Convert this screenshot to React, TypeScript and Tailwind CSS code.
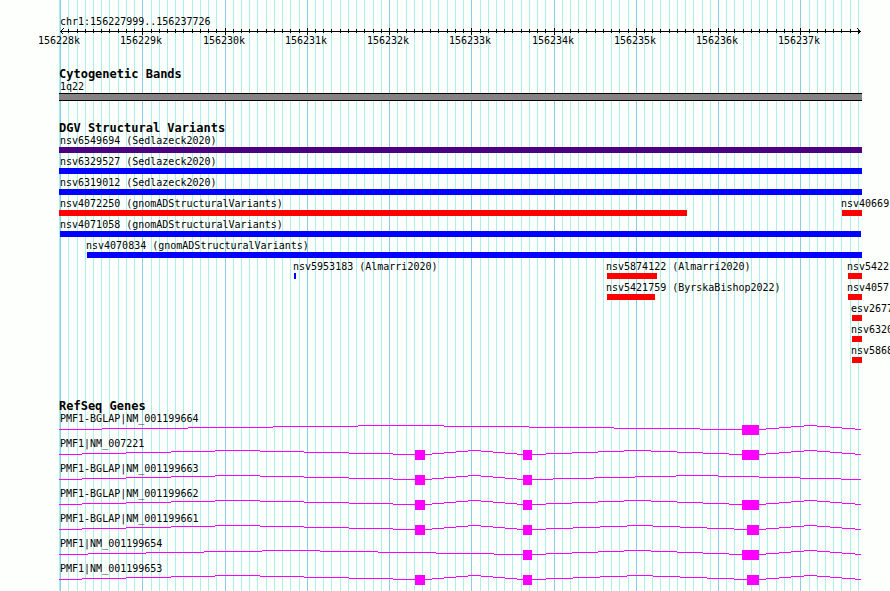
const PLOT_WIDTH = 803;
const REGION_START = 156227999;
const REGION_LENGTH = 9727;

// bp position -> plot x, the scale leaves 1px on the left and 2px on the right
const toX = (bp: number) =>
  Math.round(((bp - REGION_START) / REGION_LENGTH) * 800) + 1;

const percent = (x: number) => `${(x / PLOT_WIDTH) * 100}%`;

const ticks = Array.from({ length: 98 }, (_, i) => ({
  x: toX(156228000 + i * 100),
  major: i % 10 === 0,
  label: `${156228 + i / 10}k`,
}));

type Variant = { name: string; start: number; end: number; color: string };

const PURPLE = "bg-[#4b0082]";
const BLUE = "bg-[#0000ff]";
const RED = "bg-[#ff0000]";

const variantLanes: Variant[][] = [
  [{ name: "nsv6549694 (Sedlazeck2020)", start: 0, end: 803, color: PURPLE }],
  [{ name: "nsv6329527 (Sedlazeck2020)", start: 0, end: 803, color: BLUE }],
  [{ name: "nsv6319012 (Sedlazeck2020)", start: 0, end: 803, color: BLUE }],
  [
    { name: "nsv4072250 (gnomADStructuralVariants)", start: 0, end: 628, color: RED },
    { name: "nsv40669", start: 783, end: 803, color: RED },
  ],
  [{ name: "nsv4071058 (gnomADStructuralVariants)", start: 1, end: 802, color: BLUE }],
  [{ name: "nsv4070834 (gnomADStructuralVariants)", start: 28, end: 803, color: BLUE }],
  [
    { name: "nsv5953183 (Almarri2020)", start: 235, end: 237, color: BLUE },
    { name: "nsv5874122 (Almarri2020)", start: 548, end: 598, color: RED },
    { name: "nsv5422", start: 789, end: 803, color: RED },
  ],
  [
    { name: "nsv5421759 (ByrskaBishop2022)", start: 548, end: 596, color: RED },
    { name: "nsv4057", start: 789, end: 803, color: RED },
  ],
  [{ name: "esv2677", start: 793, end: 803, color: RED }],
  [{ name: "nsv6320", start: 793, end: 803, color: RED }],
  [{ name: "nsv5868", start: 793, end: 803, color: RED }],
];

const genes: { name: string; exons: [number, number][] }[] = [
  { name: "PMF1-BGLAP|NM_001199664", exons: [[683, 700]] },
  { name: "PMF1|NM_007221", exons: [[356, 366], [464, 473], [683, 700]] },
  { name: "PMF1-BGLAP|NM_001199663", exons: [[356, 366], [464, 473]] },
  { name: "PMF1-BGLAP|NM_001199662", exons: [[356, 366], [464, 473], [683, 700]] },
  { name: "PMF1-BGLAP|NM_001199661", exons: [[356, 366], [464, 473], [688, 700]] },
  { name: "PMF1|NM_001199654", exons: [[464, 473], [683, 700]] },
  { name: "PMF1|NM_001199653", exons: [[356, 366], [464, 473], [688, 700]] },
];

// introns fill the space between exons and climb to a peak in the middle,
// one pixel row at a time
const intronPath = (exons: [number, number][]) => {
  const edges = [0, ...exons.flat(), 802];
  let path = "";
  for (let i = 0; i < edges.length; i += 2) {
    const [a, b] = [edges[i], edges[i + 1]];
    const step = (b - a) / 8;
    let x = a;
    for (let k = 0; k <= 8; k++) {
      const next = k === 8 ? b : Math.ceil(a + (k + 0.5) * step);
      path += `M${x} ${Math.abs(k - 4) + 0.5}H${next}`;
      x = next;
    }
  }
  return path;
};

const GridLines = () => (
  <svg
    className="absolute inset-0 h-full w-full"
    viewBox="0 0 803 100"
    preserveAspectRatio="none"
    shapeRendering="crispEdges"
    aria-hidden="true"
  >
    <rect x="0" y="0" width="1" height="100" fill="#afeeee" />
    {ticks.map((tick) => (
      <rect
        key={tick.x}
        x={tick.x}
        y="0"
        width="1"
        height="100"
        fill={tick.major ? "#87ceeb" : "#afeeee"}
      />
    ))}
  </svg>
);

const Ruler = () => (
  <section>
    <p className="pl-px">chr1:156227999..156237726</p>
    <svg
      className="block h-[7px] w-full"
      viewBox="0 0 803 7"
      preserveAspectRatio="none"
      shapeRendering="crispEdges"
      aria-hidden="true"
    >
      <rect x="1" y="3" width="801" height="1" />
      {ticks.slice(1).map((tick) => (
        <rect
          key={tick.x}
          x={tick.x}
          y={tick.major ? 0 : 1}
          width="1"
          height={tick.major ? 7 : 4}
        />
      ))}
      <path d="M4.5 0.5L1.5 3.5L4.5 6.5M798.5 0.5L801.5 3.5L798.5 6.5" fill="none" stroke="#000" />
    </svg>
    <div className="relative h-3">
      {ticks
        .filter((tick) => tick.major)
        .map((tick) => (
          <span
            key={tick.label}
            className="absolute -translate-x-1/2"
            style={{ left: percent(tick.x - 1) }}
          >
            {tick.label}
          </span>
        ))}
    </div>
  </section>
);

const TrackTitle = ({ children }: { children: string }) => (
  <h2 className="text-[12px] leading-[13px] font-bold">{children}</h2>
);

const VariantLane = ({ variants }: { variants: Variant[] }) => (
  <li className="relative h-[18px]">
    {variants.map((variant) => (
      <div
        key={variant.name}
        className="absolute top-0"
        style={{
          left: percent(variant.start),
          width: percent(variant.end - variant.start),
        }}
      >
        <p className={variant.start === 0 ? "pl-px" : variant.start > 1 ? "-ml-px" : ""}>
          {variant.name}
        </p>
        <div className={`h-1.5 ${variant.color}`} />
      </div>
    ))}
  </li>
);

const App = () => {
  return (
    <main className="min-h-screen overflow-hidden bg-[#fdfffc] pr-7 pl-[59px] font-['DejaVu_Sans_Mono',monospace] text-[10px] leading-3 whitespace-nowrap text-black">
      <div className="relative">
        <GridLines />
        <div className="relative flex flex-col gap-[21px] pt-4 pb-1.5">
          <Ruler />

          {/* cytogenetic bands */}
          <section>
            <TrackTitle>Cytogenetic Bands</TrackTitle>
            <p className="pl-px">1q22</p>
            <div className="h-2 border-y border-black bg-[#878384]" />
          </section>

          {/* structural variants */}
          <section>
            <TrackTitle>DGV Structural Variants</TrackTitle>
            <ul className="flex flex-col gap-[3px]">
              {variantLanes.map((variants) => (
                <VariantLane key={variants[0].name} variants={variants} />
              ))}
            </ul>
          </section>

          {/* genes */}
          <section className="pt-4">
            <TrackTitle>RefSeq Genes</TrackTitle>
            <ul className="flex flex-col gap-[3px]">
              {genes.map((gene) => (
                <li key={gene.name}>
                  <p className="pl-px">{gene.name}</p>
                  <svg
                    className="block h-2.5 w-full"
                    viewBox="0 0 803 10"
                    preserveAspectRatio="none"
                    shapeRendering="crispEdges"
                    aria-hidden="true"
                  >
                    <path d={intronPath(gene.exons)} fill="none" stroke="#ff00ff" />
                    {gene.exons.map(([start, end]) => (
                      <rect
                        key={start}
                        x={start}
                        y="0"
                        width={end - start}
                        height="10"
                        fill="#ff00ff"
                      />
                    ))}
                  </svg>
                </li>
              ))}
            </ul>
          </section>
        </div>
      </div>
    </main>
  );
};

export default App;
